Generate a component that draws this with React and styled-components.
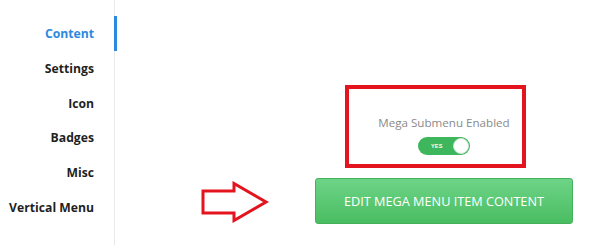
import React, { useState } from 'react';
import styled, { createGlobalStyle } from 'styled-components';

const Global = createGlobalStyle`
body {
margin: 0;
background: #ffffff;
font-family: 'Open Sans', 'Liberation Sans', sans-serif;
}
`;

const Page = styled.div`
display: flex;
flex-direction: row;
width: 600px;
height: 245px;
overflow: hidden;
`;

const Sidebar = styled.nav`
width: 114px;
flex-shrink: 0;
border-right: 1px solid #e9e9e9;
padding-top: 16px;
display: flex;
flex-direction: column;
`;

const NavItem = styled.div`
position: relative;
height: 34.7px;
display: flex;
align-items: center;
justify-content: flex-end;
padding-right: 20px;
padding-top: 1px;
box-sizing: border-box;
font-size: 12.2px;
font-weight: 700;
color: ${props => (props.active ? '#2b8ade' : '#1f1f1f')};

&::after {
  content: '';
  display: ${props => (props.active ? 'block' : 'none')};
  position: absolute;
  top: 0;
  bottom: 0;
  right: -3px;
  width: 3px;
  background: #2b8ade;
}
`;

const Main = styled.main`
position: relative;
flex: 1;
display: flex;
flex-direction: column;
align-items: flex-start;
padding: 114px 0 0 200px;
box-sizing: border-box;
`;

const Column = styled.div`
width: 258px;
display: flex;
flex-direction: column;
align-items: center;
`;

const Label = styled.div`
font-size: 11.6px;
line-height: 18px;
color: #8a8a8a;
`;

const Toggle = styled.button`
margin-top: 5px;
width: 52px;
height: 18px;
border: none;
padding: 0;
border-radius: 9px;
background: ${props => (props.on ? '#3db65c' : '#c8c8c8')};
position: relative;
cursor: pointer;
display: flex;
align-items: center;
`;

const ToggleText = styled.span`
font-size: 5.5px;
font-weight: 700;
color: #ffffff;
margin-left: 13px;
letter-spacing: 0.2px;
`;

const Knob = styled.span`
position: absolute;
top: 1px;
${props => (props.on ? 'right: 1px;' : 'left: 1px;')}
width: 16px;
height: 16px;
border-radius: 50%;
background: #ffffff;
box-sizing: border-box;
border: 1px solid #cfe3d4;
`;

const EditButton = styled.button`
margin-top: 23px;
width: 258px;
height: 46px;
border: 1px solid #43b05c;
border-radius: 3px;
background: linear-gradient(to bottom, #6dd487, #4abd61);
color: #ffffff;
font-family: 'Open Sans', 'Liberation Sans', sans-serif;
font-size: 12.7px;
text-transform: uppercase;
cursor: pointer;
`;

const Highlight = styled.div`
position: absolute;
left: 230px;
top: 85px;
width: 181px;
height: 83px;
box-sizing: border-box;
border: 4px solid #e3141e;
pointer-events: none;
`;

const Arrow = styled.svg`
position: absolute;
left: 86px;
top: 181px;
`;

const items = ['Content', 'Settings', 'Icon', 'Badges', 'Misc', 'Vertical Menu'];

export default function App() {
    const [enabled, setEnabled] = useState(true);

    return (
        <Page>
            <Global />
            <Sidebar>
                {items.map(item => (
                    <NavItem key={item} active={item === 'Content'}>{item}</NavItem>
                ))}
            </Sidebar>
            <Main>
                <Column>
                    <Label>Mega Submenu Enabled</Label>
                    <Toggle on={enabled} onClick={() => setEnabled(!enabled)}>
                        {enabled && <ToggleText>YES</ToggleText>}
                        <Knob on={enabled} />
                    </Toggle>
                    <EditButton>Edit Mega Menu Item Content</EditButton>
                </Column>
                <Highlight />
                <Arrow width="68" height="42" viewBox="0 0 68 42">
                    <polygon
                        points="2,10 33,10 33,2.5 65,21 33,39.5 33,32 2,32"
                        fill="none"
                        stroke="#e3141e"
                        strokeWidth="3"
                        strokeLinejoin="miter"
                    />
                </Arrow>
            </Main>
        </Page>
    );
}
